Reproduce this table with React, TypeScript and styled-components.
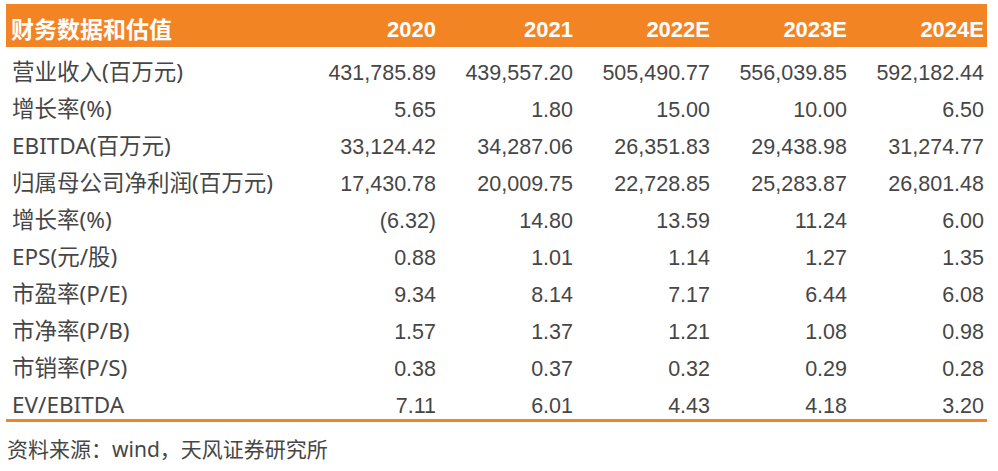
import styled, { createGlobalStyle } from "styled-components";

const GlobalStyle = createGlobalStyle`
  body {
    margin: 0;
    background: #ffffff;
  }
`;

const years = ["2020", "2021", "2022E", "2023E", "2024E"];

const rows: { label: string; values: string[] }[] = [
  { label: "营业收入(百万元)", values: ["431,785.89", "439,557.20", "505,490.77", "556,039.85", "592,182.44"] },
  { label: "增长率(%)", values: ["5.65", "1.80", "15.00", "10.00", "6.50"] },
  { label: "EBITDA(百万元)", values: ["33,124.42", "34,287.06", "26,351.83", "29,438.98", "31,274.77"] },
  { label: "归属母公司净利润(百万元)", values: ["17,430.78", "20,009.75", "22,728.85", "25,283.87", "26,801.48"] },
  { label: "增长率(%)", values: ["(6.32)", "14.80", "13.59", "11.24", "6.00"] },
  { label: "EPS(元/股)", values: ["0.88", "1.01", "1.14", "1.27", "1.35"] },
  { label: "市盈率(P/E)", values: ["9.34", "8.14", "7.17", "6.44", "6.08"] },
  { label: "市净率(P/B)", values: ["1.57", "1.37", "1.21", "1.08", "0.98"] },
  { label: "市销率(P/S)", values: ["0.38", "0.37", "0.32", "0.29", "0.28"] },
  { label: "EV/EBITDA", values: ["7.11", "6.01", "4.43", "4.18", "3.20"] },
];

export default function App() {
  return (
    <>
      <GlobalStyle />
      <Page>
        <Table>
          <HeaderRow>
            <HeaderLabel>财务数据和估值</HeaderLabel>
            {years.map((y) => (
              <HeaderCell key={y}>{y}</HeaderCell>
            ))}
          </HeaderRow>
          <Body>
            {rows.map((r, i) => (
              <Row key={i}>
                <Label>{r.label}</Label>
                {r.values.map((v, j) => (
                  <Cell key={j}>{v}</Cell>
                ))}
              </Row>
            ))}
          </Body>
        </Table>
        <Source>资料来源：wind，天风证券研究所</Source>
      </Page>
    </>
  );
}

const Page = styled.div`
  width: 998px;
  height: 471px;
  padding: 4px 0 0 6px;
  box-sizing: border-box;
  color: #464646;
`;

const Table = styled.div`
  width: 981px;
`;

const grid = `
  display: grid;
  grid-template-columns: 293px repeat(5, 137px);
  padding-right: 3px;
  box-sizing: border-box;
`;

const HeaderRow = styled.div`
  ${grid}
  height: 43px;
  padding-top: 15px;
  background: #f38424;
  color: #ffffff;
  font-weight: bold;
`;

const HeaderLabel = styled.div`
  padding-left: 5px;
  font-family: "Noto Sans CJK SC", sans-serif;
  font-size: 23px;
  line-height: 22px;
  margin-top: -2px;
`;

const HeaderCell = styled.div`
  text-align: right;
  font-family: "Liberation Sans", Arial, sans-serif;
  font-size: 22px;
  line-height: 22px;
`;

const Body = styled.div`
  padding-bottom: 2px;
  border-bottom: 3px solid #f38424;
`;

const Row = styled.div`
  ${grid}
  height: 37px;
  padding-top: 14px;
  align-items: baseline;
`;

const Label = styled.div`
  padding-left: 6px;
  font-family: "Noto Sans", "Noto Sans CJK SC", sans-serif;
  font-size: 22.5px;
  line-height: 21px;
  white-space: nowrap;
`;

const Cell = styled.div`
  text-align: right;
  font-family: "Liberation Sans", Arial, sans-serif;
  font-size: 21.5px;
  line-height: 21px;
`;

const Source = styled.div`
  margin-top: 16px;
  padding-left: 1px;
  font-family: "Noto Sans", "Noto Sans CJK SC", sans-serif;
  font-size: 21px;
  line-height: 22px;
`;
